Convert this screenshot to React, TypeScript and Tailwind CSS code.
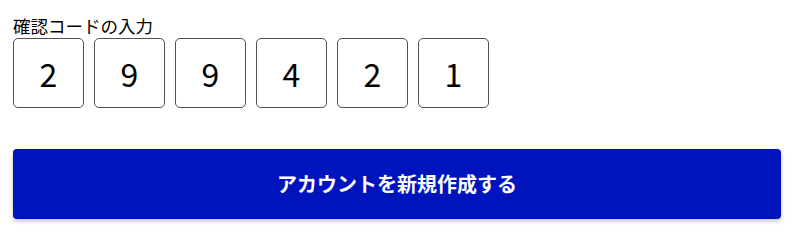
export default function App() {
  const digits = ["2", "9", "9", "4", "2", "1"];
  return (
    <div
      className="w-[800px] h-[233px] bg-white px-[13px] pt-[14px]"
      style={{ fontFamily: '"Noto Sans CJK JP", "Noto Sans", sans-serif' }}
    >
      <div className="w-[768px]">
        <label className="block text-[17.5px] leading-[24px] text-black">確認コードの入力</label>
        <div className="flex gap-[10px]">
          {digits.map((d, i) => (
            <input
              key={i}
              readOnly
              value={d}
              className="w-[71px] h-[70px] border border-[#505050] rounded-[5px] text-center text-[32px] text-black outline-none"
            />
          ))}
        </div>
        <button className="mt-[41px] w-[768px] h-[70px] rounded-[4px] bg-[#0014be] text-white text-[20px] font-bold shadow-[0_2px_4px_rgba(0,0,0,0.25)]">
          アカウントを新規作成する
        </button>
      </div>
    </div>
  );
}
